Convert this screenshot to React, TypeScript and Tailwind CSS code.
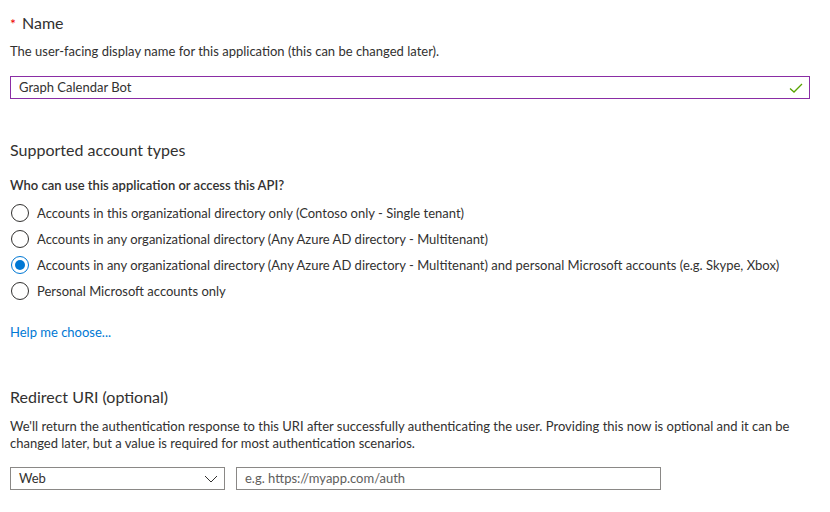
import React from "react";

const accountTypes = [
  "Accounts in this organizational directory only (Contoso only - Single tenant)",
  "Accounts in any organizational directory (Any Azure AD directory - Multitenant)",
  "Accounts in any organizational directory (Any Azure AD directory - Multitenant) and personal Microsoft accounts (e.g. Skype, Xbox)",
  "Personal Microsoft accounts only",
];

function Radio({ checked }: { checked: boolean }) {
  return (
    <span
      className={
        "flex h-[18px] w-[18px] shrink-0 items-center justify-center rounded-full border " +
        (checked ? "border-[#0078d4]" : "border-[#323130]")
      }
    >
      {checked && <span className="h-[10px] w-[10px] rounded-full bg-[#0078d4]" />}
    </span>
  );
}

export default function App() {
  const [selected, setSelected] = React.useState(2);
  return (
    <div
      className="h-[512px] w-[830px] overflow-hidden bg-white px-[10px] text-[13px] text-[#323130]"
      style={{ fontFamily: '"Segoe UI", Lato, "Liberation Sans", sans-serif' }}
    >
      {/* Name */}
      <div className="pt-[12px] flex items-baseline text-[16px] leading-[22px]">
        <span className="mr-[6px] text-[#e00] text-[14px]">*</span>
        <span>Name</span>
      </div>
      <p className="mt-[7px] leading-[18px]">
        The user-facing display name for this application (this can be changed later).
      </p>
      <div className="mt-[16px] flex h-[23px] w-[800px] items-center border border-[#8a2da5] pl-[8px] pr-[6px]">
        <span className="flex-1">Graph Calendar Bot</span>
        <svg width="14" height="12" viewBox="0 0 14 12" fill="none">
          <path d="M1 6.5 L5 10 L13 2" stroke="#57a300" strokeWidth="1.3" />
        </svg>
      </div>

      {/* Supported account types */}
      <h2 className="mt-[40px] text-[16px] leading-[22px]">Supported account types</h2>
      <p className="mt-[15px] font-semibold leading-[18px]">Who can use this application or access this API?</p>
      <div className="mt-[6px] flex flex-col">
        {accountTypes.map((t, i) => (
          <label
            key={t}
            className="flex h-[26px] cursor-pointer items-center gap-[8px] pl-[1px]"
            onClick={() => setSelected(i)}
          >
            <Radio checked={selected === i} />
            <span className="leading-[18px]">{t}</span>
          </label>
        ))}
      </div>
      <a className="mt-[19px] block leading-[18px] text-[#0078d4]" href="#">
        Help me choose...
      </a>

      {/* Redirect URI */}
      <h2 className="mt-[45px] text-[16px] leading-[22px]">Redirect URI (optional)</h2>
      <p className="mt-[10px] pr-[10px] leading-[17px]">
        We'll return the authentication response to this URI after successfully authenticating the user. Providing
        this now is optional and it can be changed later, but a value is required for most authentication scenarios.
      </p>
      <div className="mt-[15px] flex gap-[11px]">
        <div className="flex h-[23px] w-[215px] items-center justify-between border border-[#8a8886] pl-[8px] pr-[6px]">
          <span>Web</span>
          <svg width="14" height="8" viewBox="0 0 14 8" fill="none">
            <path d="M1 1 L7 7 L13 1" stroke="#323130" strokeWidth="1" />
          </svg>
        </div>
        <div className="flex h-[23px] w-[425px] items-center border border-[#8a8886] pl-[8px] text-[#605e5c]">
          e.g. https://myapp.com/auth
        </div>
      </div>
    </div>
  );
}
